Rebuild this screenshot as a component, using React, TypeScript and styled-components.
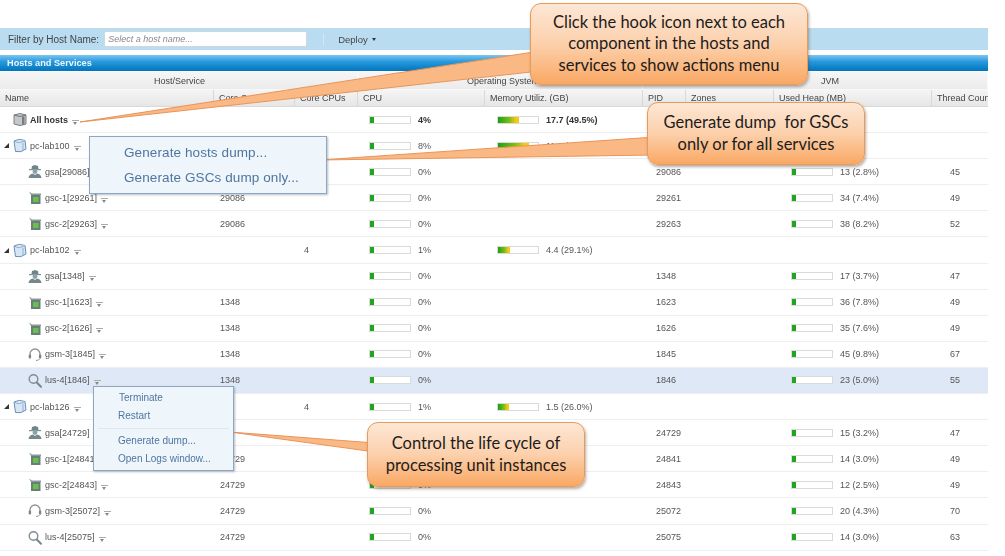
import React from "react";
import styled, { createGlobalStyle } from "styled-components";

const Global = createGlobalStyle`
  html, body { margin: 0; padding: 0; background: #fff; }
  body { font-family: "Liberation Sans", Arial, sans-serif; overflow: hidden; }
`;

const COLS = "214px 81px 63px 127px 158px 43px 88px 158px 56px";

const Page = styled.div`
  position: relative;
  width: 1005px;
  height: 556px;
  overflow: hidden;
`;
const Console = styled.div`
  width: 988px;
  padding-top: 28px;
  filter: blur(0.35px);
`;
const Toolbar = styled.div`
  height: 22px;
  background: #b9dcf0;
  display: flex;
  align-items: center;
  padding-left: 8px;
  color: #444;
  font-size: 10px;
`;
const FilterInput = styled.div`
  width: 198px;
  height: 14px;
  margin-left: 5px;
  background: #fff;
  border: 1px solid #cfd8de;
  border-radius: 2px;
  padding-left: 3px;
  font-size: 9px;
  line-height: 14px;
  font-style: italic;
  color: #8a8a8a;
`;
const Divider = styled.span`
  width: 1px;
  height: 11px;
  background: #d4e8f4;
  margin: 0 14px 0 16px;
`;
const Deploy = styled.span`
  display: flex;
  align-items: center;
  gap: 4px;
  font-size: 9.5px;
  color: #444;
  &::after {
    content: "";
    border: 2.5px solid transparent;
    border-top: 3px solid #333;
    border-bottom: 0;
  }
`;
const TitleBar = styled.div`
  height: 16px;
  margin-top: 5px;
  background: linear-gradient(#7cc6ee, #2a9ade 40%, #0074bd);
  color: #eaf6fd;
  font-size: 9.2px;
  font-weight: bold;
  line-height: 16px;
  padding-left: 7px;
`;
const GroupRow = styled.div`
  display: grid;
  grid-template-columns: 358px 1fr 345px;
  height: 18px;
  margin-top: 1px;
  background: linear-gradient(#f6f6f6, #ebebeb);
  font-size: 9px;
  color: #444;
  line-height: 19px;
  text-align: center;
  border-bottom: 1px solid #f8f8f8;
  box-sizing: border-box;
`;
const GroupCell = styled.div<{ $shift?: number }>`
  border-right: 1px solid #fafafa;
  padding-left: ${(p) => p.$shift ?? 0}px;
`;
const HeadRow = styled.div`
  display: grid;
  grid-template-columns: ${COLS};
  height: 17px;
  background: linear-gradient(#f5f5f5, #e6e6e6);
  border-bottom: 1px solid #d9d9d9;
  box-sizing: border-box;
`;
const HeadCell = styled.div`
  font-size: 9px;
  line-height: 17px;
  color: #444;
  padding-left: 5px;
  border-right: 1px solid #d8d8d8;
  white-space: nowrap;
  overflow: hidden;
  &:last-child { border-right: 0; }
`;
const Row = styled.div<{ $selected?: boolean; $bold?: boolean }>`
  display: grid;
  grid-template-columns: ${COLS};
  height: 26.1px;
  box-sizing: border-box;
  align-items: center;
  border-bottom: 1px solid #eeeeee;
  background: ${(p) => (p.$selected ? "#dfe8f6" : "#fff")};
  font-size: 9px;
  color: ${(p) => (p.$bold ? "#333" : "#555")};
  font-weight: ${(p) => (p.$bold ? "bold" : "normal")};
`;
const NameCell = styled.div<{ $host: boolean }>`
  display: flex;
  align-items: center;
  padding-left: ${(p) => (p.$host ? 4 : 28)}px;
`;
const Expander = styled.span`
  width: 0;
  height: 0;
  margin-right: 4px;
  border-style: solid;
  border-width: 0 0 5px 5px;
  border-color: transparent transparent #333 transparent;
`;
const Spacer = styled.span`
  width: 9px;
`;
const IconSlot = styled.span`
  display: flex;
  width: 14px;
  height: 15px;
  margin-right: 3px;
`;
const Hook = styled.span`
  display: inline-block;
  width: 6px;
  height: 4px;
  margin: 4px 0 0 4px;
  position: relative;
  &::before {
    content: "";
    position: absolute;
    left: 0;
    top: 0;
    width: 7px;
    height: 1px;
    background: #aaa;
  }
  &::after {
    content: "";
    position: absolute;
    left: 1px;
    top: 2px;
    border: 2.5px solid transparent;
    border-top: 3px solid #888;
    border-bottom: 0;
  }
`;
const Cell = styled.div<{ $pad: number }>`
  padding-left: ${(p) => p.$pad}px;
  white-space: nowrap;
`;
const Meter = styled.div<{ $pad: number }>`
  display: flex;
  align-items: center;
  gap: 7px;
  padding-left: ${(p) => p.$pad}px;
  white-space: nowrap;
`;
const MeterBar = styled.span`
  display: block;
  width: 40px;
  height: 6px;
  border: 1px solid #d8dbd8;
  background: #fff;
  flex: none;
  box-sizing: content-box;
`;
const MeterFill = styled.span<{ $gradient?: boolean }>`
  display: block;
  height: 100%;
  background: ${(p) =>
    p.$gradient ? "linear-gradient(90deg, #17a117, #7fbf14 55%, #f6c915 85%)" : "#1fa51f"};
`;
const Tails = styled.svg`
  position: absolute;
  left: 0;
  top: 0;
  z-index: 1;
`;
const Menu = styled.div<{ $x: number; $y: number; $w: number }>`
  position: absolute;
  z-index: 2;
  left: ${(p) => p.$x}px;
  top: ${(p) => p.$y}px;
  width: ${(p) => p.$w}px;
  box-sizing: border-box;
  background: #eef6fc;
  border: 1px solid #8ea6bf;
  box-shadow: 1px 1px 2px rgba(90, 110, 130, 0.45);
  color: #4f75a0;
  filter: blur(0.3px);
`;
const BigMenuBody = styled.div`
  padding: 4px 0 3px;
`;
const SmallMenuBody = styled.div`
  padding: 2px 0;
`;
const BigItem = styled.div`
  font-size: 13.5px;
  line-height: 24.5px;
  padding-left: 34px;
  letter-spacing: 0.1px;
`;
const SmallItem = styled.div<{ $indent: number }>`
  font-size: 10px;
  line-height: 18px;
  padding-left: ${(p) => p.$indent}px;
`;
const MenuSep = styled.div`
  height: 1px;
  background: #dfe6ec;
  margin: 3px 4px 3px 4px;
`;
const Callout = styled.div<{ $x: number; $y: number; $w: number; $h: number }>`
  position: absolute;
  z-index: 3;
  left: ${(p) => p.$x}px;
  top: ${(p) => p.$y}px;
  width: ${(p) => p.$w}px;
  height: ${(p) => p.$h}px;
  box-sizing: border-box;
  border: 1px solid #e79a5a;
  border-radius: 11px;
  background: linear-gradient(#fde7d6, #fcd0ab 50%, #faa864);
  box-shadow: 1px 2px 3px rgba(90, 70, 50, 0.45);
  display: flex;
  align-items: center;
  justify-content: center;
  text-align: center;
  font-family: Lato, "Open Sans", sans-serif;
  font-size: 16.5px;
  line-height: 21.3px;
  color: #1c1c1c;
`;

const Cylinder = () => (
  <svg width="14" height="15" viewBox="0 0 14 15">
    <path d="M1 3 Q7 0 13 3 V12 Q7 15 1 12Z" fill="#c4c8ca" stroke="#7c8184" />
    <path d="M1 3 Q7 6 13 3" fill="none" stroke="#6f7477" />
    <rect x="9" y="4.5" width="2.5" height="8" fill="#777c80" />
  </svg>
);
const HostIcon = () => (
  <svg width="14" height="15" viewBox="0 0 14 15">
    <path d="M1 3 Q6 0 12 2.5 L13 11 Q8 15 2.5 13.5 Z" fill="#d6e6f6" stroke="#6c8fb4" />
    <path d="M1 3 Q6 6 12 2.5" fill="#eef6fd" stroke="#86a6c8" />
    <path d="M10 5 V12.5" stroke="#8fb0d0" />
  </svg>
);
const AgentIcon = () => (
  <svg width="14" height="15" viewBox="0 0 14 15">
    <path d="M4 2 L7 1 L10 2 L10.5 5 H3.5Z" fill="#6f858c" />
    <rect x="1" y="5" width="12" height="1.2" fill="#7e9298" />
    <circle cx="7" cy="7.5" r="2.4" fill="#8ea1a6" />
    <path d="M0.5 14 Q1 10 5 9.5 L7 11 L9 9.5 Q13 10 13.5 14Z" fill="#73888f" />
  </svg>
);
const GscIcon = () => (
  <svg width="14" height="15" viewBox="0 0 14 15">
    <path d="M1 1.5 L4 3.5 H13 V5 H3 Z" fill="#8a9a9c" />
    <rect x="3" y="5" width="9.5" height="9" fill="#6a7d7d" />
    <rect x="5" y="7" width="5.5" height="5" fill="#69c04a" />
  </svg>
);
const HeadsetIcon = () => (
  <svg width="14" height="15" viewBox="0 0 14 15">
    <path d="M2 9 V7 a5 5 0 0 1 10 0 V9" fill="none" stroke="#8b9699" strokeWidth="1.3" />
    <rect x="0.7" y="7.5" width="2.4" height="4" rx="1" fill="#7a8689" />
    <rect x="10.9" y="7.5" width="2.4" height="4" rx="1" fill="#7a8689" />
    <path d="M12 11.5 Q11 13.5 8 13.5" fill="none" stroke="#8b9699" />
  </svg>
);
const SearchIcon = () => (
  <svg width="14" height="15" viewBox="0 0 14 15">
    <circle cx="5.5" cy="6" r="4.3" fill="none" stroke="#7f8c93" strokeWidth="1.4" />
    <path d="M8.8 9.5 L13 13.8" stroke="#7a878e" strokeWidth="2" strokeLinecap="round" />
  </svg>
);

type Kind = "all" | "host" | "gsa" | "gsc" | "gsm" | "lus";
const ICONS: Record<Kind, () => React.JSX.Element> = {
  all: Cylinder,
  host: HostIcon,
  gsa: AgentIcon,
  gsc: GscIcon,
  gsm: HeadsetIcon,
  lus: SearchIcon,
};

interface Data {
  kind: Kind;
  name: string;
  parent?: string;
  cores?: string;
  cpu: number;
  mem?: [string, number];
  pid?: string;
  heap?: string;
  threads?: string;
  selected?: boolean;
}

const rows: Data[] = [
  { kind: "all", name: "All hosts", cpu: 4, mem: ["17.7 (49.5%)", 21] },
  { kind: "host", name: "pc-lab100", cores: "4", cpu: 8, mem: ["11.9 (74.4%)", 31] },
  { kind: "gsa", name: "gsa[29086]", cpu: 0, pid: "29086", heap: "13 (2.8%)", threads: "45" },
  { kind: "gsc", name: "gsc-1[29261]", parent: "29086", cpu: 0, pid: "29261", heap: "34 (7.4%)", threads: "49" },
  { kind: "gsc", name: "gsc-2[29263]", parent: "29086", cpu: 0, pid: "29263", heap: "38 (8.2%)", threads: "52" },
  { kind: "host", name: "pc-lab102", cores: "4", cpu: 1, mem: ["4.4 (29.1%)", 12] },
  { kind: "gsa", name: "gsa[1348]", cpu: 0, pid: "1348", heap: "17 (3.7%)", threads: "47" },
  { kind: "gsc", name: "gsc-1[1623]", parent: "1348", cpu: 0, pid: "1623", heap: "36 (7.8%)", threads: "49" },
  { kind: "gsc", name: "gsc-2[1626]", parent: "1348", cpu: 0, pid: "1626", heap: "35 (7.6%)", threads: "49" },
  { kind: "gsm", name: "gsm-3[1845]", parent: "1348", cpu: 0, pid: "1845", heap: "45 (9.8%)", threads: "67" },
  { kind: "lus", name: "lus-4[1846]", parent: "1348", cpu: 0, pid: "1846", heap: "23 (5.0%)", threads: "55", selected: true },
  { kind: "host", name: "pc-lab126", cores: "4", cpu: 1, mem: ["1.5 (26.0%)", 11] },
  { kind: "gsa", name: "gsa[24729]", cpu: 0, pid: "24729", heap: "15 (3.2%)", threads: "47" },
  { kind: "gsc", name: "gsc-1[24841]", parent: "24729", cpu: 0, pid: "24841", heap: "14 (3.0%)", threads: "49" },
  { kind: "gsc", name: "gsc-2[24843]", parent: "24729", cpu: 0, pid: "24843", heap: "12 (2.5%)", threads: "49" },
  { kind: "gsm", name: "gsm-3[25072]", parent: "24729", cpu: 0, pid: "25072", heap: "20 (4.3%)", threads: "70" },
  { kind: "lus", name: "lus-4[25075]", parent: "24729", cpu: 0, pid: "25075", heap: "14 (3.0%)", threads: "63" },
];

const heads = ["Name", "Core Service", "Core CPUs", "CPU", "Memory Utiliz. (GB)", "PID", "Zones", "Used Heap (MB)", "Thread Count"];

const Bar = ({ pad, width, gradient, label }: { pad: number; width: number; gradient?: boolean; label: string }) => (
  <Meter $pad={pad}>
    <MeterBar>
      <MeterFill $gradient={gradient} style={{ width }} />
    </MeterBar>
    {label}
  </Meter>
);

export default function App() {
  return (
    <Page>
      <Global />
      <Console>
        <Toolbar>
          Filter by Host Name:
          <FilterInput>Select a host name...</FilterInput>
          <Divider />
          <Deploy>Deploy</Deploy>
        </Toolbar>
        <TitleBar>Hosts and Services</TitleBar>
        <GroupRow>
          <GroupCell $shift={2}>Host/Service</GroupCell>
          <GroupCell $shift={6}>Operating System</GroupCell>
          <GroupCell $shift={30}>JVM</GroupCell>
        </GroupRow>
        <HeadRow>
          {heads.map((h) => (
            <HeadCell key={h}>{h}</HeadCell>
          ))}
        </HeadRow>
        {rows.map((r) => {
          const Icon = ICONS[r.kind];
          const isHost = r.kind === "host" || r.kind === "all";
          return (
            <Row key={r.name} $selected={r.selected} $bold={r.kind === "all"}>
              <NameCell $host={isHost}>
                {r.kind === "host" && <Expander />}
                {r.kind === "all" && <Spacer />}
                <IconSlot>
                  <Icon />
                </IconSlot>
                {r.name}
                <Hook />
              </NameCell>
              <Cell $pad={6}>{r.parent}</Cell>
              <Cell $pad={9}>{r.cores}</Cell>
              <Bar pad={11} width={4} label={`${r.cpu}%`} />
              {r.mem ? <Bar pad={12} width={r.mem[1]} gradient label={r.mem[0]} /> : <div />}
              <Cell $pad={13}>{r.pid}</Cell>
              <div />
              {r.heap ? <Bar pad={17} width={4} label={r.heap} /> : <div />}
              <Cell $pad={18}>{r.threads}</Cell>
            </Row>
          );
        })}
      </Console>

      <Tails width="1005" height="556" viewBox="0 0 1005 556">
        <g fill="#fab884" stroke="#e8955a" strokeWidth="1">
          <polygon points="80,122 540,51 540,71" />
          <polygon points="320,160 655,137 655,155" />
          <polygon points="230,432 375,443 375,452" />
        </g>
      </Tails>

      <Menu $x={89} $y={136} $w={238}>
        <BigMenuBody>
          <BigItem>Generate hosts dump...</BigItem>
          <BigItem>Generate GSCs dump only...</BigItem>
        </BigMenuBody>
      </Menu>
      <Menu $x={93} $y={386} $w={141}>
        <SmallMenuBody>
          <SmallItem $indent={25}>Terminate</SmallItem>
          <SmallItem $indent={24}>Restart</SmallItem>
          <MenuSep />
          <SmallItem $indent={24}>Generate dump...</SmallItem>
          <SmallItem $indent={24}>Open Logs window...</SmallItem>
        </SmallMenuBody>
      </Menu>

      <Callout $x={530} $y={3} $w={278} $h={82}>
        Click the hook icon next to each<br />component in the hosts and<br />services to show actions menu
      </Callout>
      <Callout $x={647} $y={102} $w={218} $h={63}>
        Generate dump&nbsp; for GSCs<br />only or for all services
      </Callout>
      <Callout $x={367} $y={422} $w={218} $h={65}>
        Control the life cycle of<br />processing unit instances
      </Callout>
    </Page>
  );
}
